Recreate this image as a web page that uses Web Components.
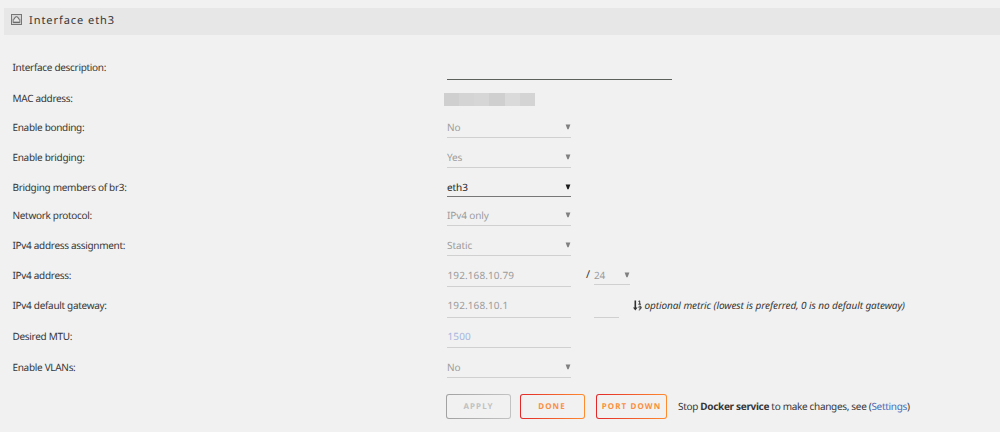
<!DOCTYPE html>
<html lang="en">
<head>
<meta charset="utf-8">
<title>Interface eth3</title>
<style>
  body {
    margin: 0;
    height: 432px;
    overflow: hidden;
    background: #f1f1f1;
    color: #363636;
    font: 10px/14px "Noto Sans", sans-serif;
    text-rendering: geometricPrecision;
  }
</style>
</head>
<body>
<settings-panel>
  <section-title slot="title">Interface eth3</section-title>
  <form-row label="Interface description:" style="--h: 30px; --top: 7px">
    <text-field style="--w: 225px; --line: #5c615c; --drop: 11px"></text-field>
  </form-row>
  <form-row label="MAC address:" style="--h: 29px"><masked-value></masked-value></form-row>
  <form-row label="Enable bonding:" style="--h: 30px"><select-field>No</select-field></form-row>
  <form-row label="Enable bridging:" style="--h: 30px"><select-field>Yes</select-field></form-row>
  <form-row label="Bridging members of br3:" style="--h: 28px"><select-field active style="--drop: 9px">eth3</select-field></form-row>
  <form-row label="Network protocol:" style="--h: 30px"><select-field>IPv4 only</select-field></form-row>
  <form-row label="IPv4 address assignment:" style="--h: 30px"><select-field>Static</select-field></form-row>
  <form-row label="IPv4 address:" style="--h: 31px">
    <text-field>192.168.10.79</text-field>
    <span class="slash">/</span>
    <select-field style="--w: 36px; --drop: 9px">24</select-field>
  </form-row>
  <form-row label="IPv4 default gateway:" style="--h: 30px; --top: 7px">
    <text-field>192.168.10.1</text-field>
    <text-field class="metric" style="--w: 25px"></text-field>
    <metric-hint>optional metric (lowest is preferred, 0 is no default gateway)</metric-hint>
  </form-row>
  <form-row label="Desired MTU:" style="--h: 31px"><text-field style="--ink: #a6b6e0">1500</text-field></form-row>
  <form-row label="Enable VLANs:" style="--h: 29px"><select-field>No</select-field></form-row>
  <action-bar slot="actions">
    <outline-button disabled style="--w: 65px">Apply</outline-button>
    <outline-button style="--w: 65px">Done</outline-button>
    <outline-button style="--w: 71px">Port down</outline-button>
    <service-note slot="note">Stop <b>Docker service</b> to make changes, see (<a>Settings</a>)</service-note>
  </action-bar>
</settings-panel>

<script>
class BaseElement extends HTMLElement {
  constructor() {
    super();
    this.attachShadow({ mode: 'open' });
    this.shadowRoot.innerHTML = this.render();
  }
}

class SettingsPanel extends BaseElement {
  render() {
    return `
      <style>
        :host { display: flex; flex-direction: column; padding: 7.5px 0 0 4px; }
        .rows { padding: 18.5px 0 0 8.5px; }
      </style>
      <slot name="title"></slot>
      <div class="rows"><slot></slot></div>
      <slot name="actions"></slot>
    `;
  }
}

class SectionTitle extends BaseElement {
  render() {
    return `
      <style>
        :host {
          display: flex;
          align-items: center;
          box-sizing: border-box;
          height: 27px;
          padding: 0 0 0 7px;
          gap: 7px;
          background: #e7e7e7;
          font-size: 11px;
          letter-spacing: .95px;
        }
        svg { display: block; margin-top: -4px; }
      </style>
      <svg width="11" height="11" viewBox="0 0 11 11">
        <rect x=".5" y=".5" width="10" height="10" fill="#d6d6d6" stroke="#767676"/>
        <path d="M2.2 8.6V5.1H3.5V3.7H4.6V2.7H6.4V3.7H7.5V5.1H8.8V8.6Z" fill="#e7e7e7" stroke="#606060" stroke-width=".8"/>
        <path d="M2.5 8.2H8.5" stroke="#606060"/>
      </svg>
      <span><slot></slot></span>
    `;
  }
}

class FormRow extends BaseElement {
  render() {
    return `
      <style>
        :host { display: flex; align-items: flex-start; height: var(--h); }
        .label { flex: none; width: 434px; padding-top: var(--top, 8px); letter-spacing: -.31px; }
        .value { display: flex; align-items: flex-start; }
        ::slotted(.slash) { padding-top: 8px; margin-left: 15px; width: 7.5px; font-size: 11px; }
        ::slotted(.metric) { margin-left: 23px; }
      </style>
      <div class="label"></div>
      <div class="value"><slot></slot></div>
    `;
  }
  connectedCallback() {
    this.shadowRoot.querySelector('.label').textContent = this.getAttribute('label');
  }
}

class TextField extends BaseElement {
  render() {
    return `
      <style>
        :host {
          display: block;
          box-sizing: border-box;
          width: var(--w, 124.5px);
          height: calc(16px + var(--drop, 11px));
          padding: var(--top, 8px) 0 0 1px;
          border-bottom: 1px solid var(--line, #d0d0d0);
          color: var(--ink, #9c9c9c);
          letter-spacing: .1px;
        }
      </style>
      <slot></slot>
    `;
  }
}

class SelectField extends BaseElement {
  render() {
    return `
      <style>
        :host {
          display: flex;
          box-sizing: border-box;
          justify-content: space-between;
          width: var(--w, 124.5px);
          height: calc(16px + var(--drop, 10px));
          padding: 8px 0 0 .5px;
          border-bottom: 1px solid #d0d0d0;
          color: #9c9c9c;
          letter-spacing: -.1px;
        }
        :host([active]) { color: #252525; border-color: #777; --arrow: #1c1c1c; }
        svg { margin-top: 4px; fill: var(--arrow, #808080); }
      </style>
      <span><slot></slot></span>
      <svg width="6" height="6" viewBox="0 0 6 6"><path d="M.6.5H5.4L3.6 5.3H2.4Z"/></svg>
    `;
  }
}

class MaskedValue extends BaseElement {
  render() {
    return `
      <style>
        :host { display: flex; height: 13px; margin: 10px 0 0 -3px; }
        i { width: 15.3px; background: #d4d4d4; }
        i:nth-child(2), i:nth-child(5) { background: #cfcfcf; }
        i:nth-child(4) { background: #d6d6d6; }
        i:nth-child(6) { background: #dadada; }
      </style>
      <i></i><i></i><i></i><i></i><i></i><i></i>
    `;
  }
}

class MetricHint extends BaseElement {
  render() {
    return `
      <style>
        :host { display: flex; gap: 2.5px; padding-top: 7px; margin-left: 14px; font-style: italic; letter-spacing: -.08px; white-space: nowrap; }
        svg { margin-top: 2px; fill: none; stroke: #303030; }
      </style>
      <svg width="9" height="11" viewBox="0 0 9 11">
        <path d="M2.3.5V9" stroke-width="1.6"/>
        <path d="M0 7.6H4.6L2.3 10.5Z" fill="#303030" stroke="none"/>
        <path d="M5.4 1.4L6.7.9V4.1M5.3 4.2H8M8 7.2A1.1 1 0 1 1 8 7.1C8 8.8 7.4 9.8 5.8 10" stroke-width="1"/>
      </svg>
      <span><slot></slot></span>
    `;
  }
}

class ActionBar extends BaseElement {
  render() {
    return `
      <style>
        :host { display: flex; align-items: center; padding: 13px 0 0 442px; }
        .buttons { display: flex; gap: 8.5px; }
        ::slotted(outline-button:last-of-type) { margin-left: 3px; }
      </style>
      <div class="buttons"><slot></slot></div>
      <slot name="note"></slot>
    `;
  }
}

class OutlineButton extends BaseElement {
  render() {
    return `
      <style>
        :host {
          display: flex;
          align-items: center;
          justify-content: center;
          box-sizing: border-box;
          width: var(--w);
          height: 25px;
          border: 1.5px solid transparent;
          border-radius: 3px;
          background: linear-gradient(#f1f1f1, #f1f1f1) padding-box, linear-gradient(90deg, #e22828, #ff8c2f) border-box;
          color: #fa8f3e;
          font-size: 8px;
          font-weight: bold;
          letter-spacing: 1.1px;
          text-transform: uppercase;
          white-space: nowrap;
        }
        :host([disabled]) {
          color: #c1c1c1;
          background: linear-gradient(#f1f1f1, #f1f1f1) padding-box, linear-gradient(90deg, #a2a2a2, #c3c3c3) border-box;
        }
        span { padding-top: 1px; }
      </style>
      <span><slot></slot></span>
    `;
  }
}

class ServiceNote extends BaseElement {
  render() {
    return `
      <style>
        :host { display: block; margin: -1px 0 0 11px; letter-spacing: -.32px; white-space: nowrap; }
        ::slotted(a) { color: #486dba; }
      </style>
      <slot></slot>
    `;
  }
}

customElements.define('settings-panel', SettingsPanel);
customElements.define('section-title', SectionTitle);
customElements.define('form-row', FormRow);
customElements.define('text-field', TextField);
customElements.define('select-field', SelectField);
customElements.define('masked-value', MaskedValue);
customElements.define('metric-hint', MetricHint);
customElements.define('action-bar', ActionBar);
customElements.define('outline-button', OutlineButton);
customElements.define('service-note', ServiceNote);
</script>
</body>
</html>
